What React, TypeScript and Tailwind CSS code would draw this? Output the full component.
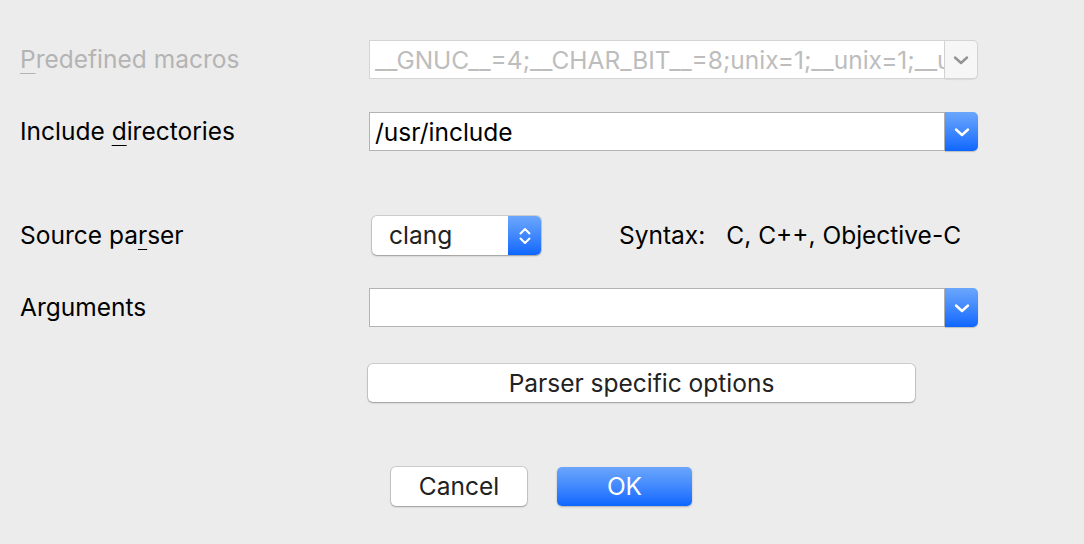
import React from 'react'

const font = { fontFamily: 'Inter, "Noto Sans", sans-serif' }

function ChevronDown({ color }: { color: string }) {
  return (
    <svg width="16" height="10" viewBox="0 0 16 10" fill="none">
      <path d="M2 2.5l6 5.5 6-5.5" stroke={color} strokeWidth="2.4" strokeLinecap="round" strokeLinejoin="round" />
    </svg>
  )
}

function UpDown() {
  return (
    <svg width="14" height="22" viewBox="0 0 14 22" fill="none">
      <path d="M2.5 8.5l4.5-4.5 4.5 4.5" stroke="white" strokeWidth="2" strokeLinecap="round" strokeLinejoin="round" />
      <path d="M2.5 13.5l4.5 4.5 4.5-4.5" stroke="white" strokeWidth="2" strokeLinecap="round" strokeLinejoin="round" />
    </svg>
  )
}

function Label({ children, disabled }: { children: React.ReactNode; disabled?: boolean }) {
  return (
    <div className={`w-[349px] shrink-0 text-[24.5px] leading-none ${disabled ? 'text-[#b4b4b4]' : 'text-black'}`}>
      {children}
    </div>
  )
}

function U({ children }: { children: React.ReactNode }) {
  return <span className="underline decoration-1 underline-offset-[5px]">{children}</span>
}

function Combo({ value, disabled }: { value: string; disabled?: boolean }) {
  return (
    <div className="flex h-[39px] w-[609px]">
      <div
        className={`flex-1 overflow-hidden whitespace-nowrap border pl-[5px] pr-[5px] text-[24.5px] leading-[38px] ${
          disabled ? 'border-[#d4d4d4] bg-white text-[#bdbdbd]' : 'border-[#b3b3b3] bg-white text-black'
        }`}
      >
        {value}
      </div>
      {disabled ? (
        <div className="flex w-[33px] items-center justify-center rounded-r-[5px] border border-l-0 border-[#d4d4d4] bg-[#f6f6f6] shadow-[0_1px_1px_rgba(0,0,0,0.08)]">
          <ChevronDown color="#939393" />
        </div>
      ) : (
        <div className="flex w-[33px] items-center justify-center rounded-r-[5px] bg-gradient-to-b from-[#6ba6fb] to-[#0a66ff] shadow-[0_1px_1px_rgba(0,0,0,0.2)]">
          <ChevronDown color="white" />
        </div>
      )}
    </div>
  )
}

export default function App() {
  return (
    <div className="h-[544px] w-[1084px] overflow-hidden bg-[#ececec] pl-[20px] pt-[40px]" style={font}>
      <div className="flex items-center">
        <Label disabled>
          <U>P</U>redefined macros
        </Label>
        <Combo disabled value="__GNUC__=4;__CHAR_BIT__=8;unix=1;__unix=1;__u" />
      </div>

      <div className="mt-[33px] flex items-center">
        <Label>
          Include <U>d</U>irectories
        </Label>
        <Combo value="/usr/include" />
      </div>

      <div className="mt-[65px] flex items-center">
        <Label>
          Source pa<U>r</U>ser
        </Label>
        <div className="ml-[3px] flex h-[39px] w-[169px] rounded-[5px] bg-white shadow-[0_0_0_1px_rgba(0,0,0,0.12),0_1px_2px_rgba(0,0,0,0.25)]">
          <div className="flex-1 pl-[17px] text-[24.5px] leading-[38px] text-[#222]">clang</div>
          <div className="flex w-[33px] items-center justify-center rounded-r-[5px] bg-gradient-to-b from-[#6ba6fb] to-[#0a66ff]">
            <UpDown />
          </div>
        </div>
        <div className="ml-[78px] text-[24.5px] text-black">Syntax:</div>
        <div className="ml-[21px] text-[24.5px] text-black">C, C++, Objective-C</div>
      </div>

      <div className="mt-[33px] flex items-center">
        <Label>Arguments</Label>
        <Combo value="" />
      </div>

      <div className="mt-[37px] flex">
        <div className="w-[348px] shrink-0" />
        <button className="h-[38px] w-[547px] rounded-[5px] bg-white text-[24.5px] text-[#222] shadow-[0_0_0_1px_rgba(0,0,0,0.12),0_1px_2px_rgba(0,0,0,0.25)]">
          Parser specific options
        </button>
      </div>

      <div className="mt-[65px] flex">
        <div className="w-[371px] shrink-0" />
        <button className="h-[39px] w-[136px] rounded-[5px] bg-white text-[24.5px] text-[#222] shadow-[0_0_0_1px_rgba(0,0,0,0.12),0_1px_2px_rgba(0,0,0,0.25)]">
          Cancel
        </button>
        <button className="ml-[30px] h-[39px] w-[135px] rounded-[5px] bg-gradient-to-b from-[#6ba6fb] to-[#0a66ff] text-[24.5px] text-white shadow-[0_1px_2px_rgba(0,0,0,0.25)]">
          OK
        </button>
      </div>
    </div>
  )
}
